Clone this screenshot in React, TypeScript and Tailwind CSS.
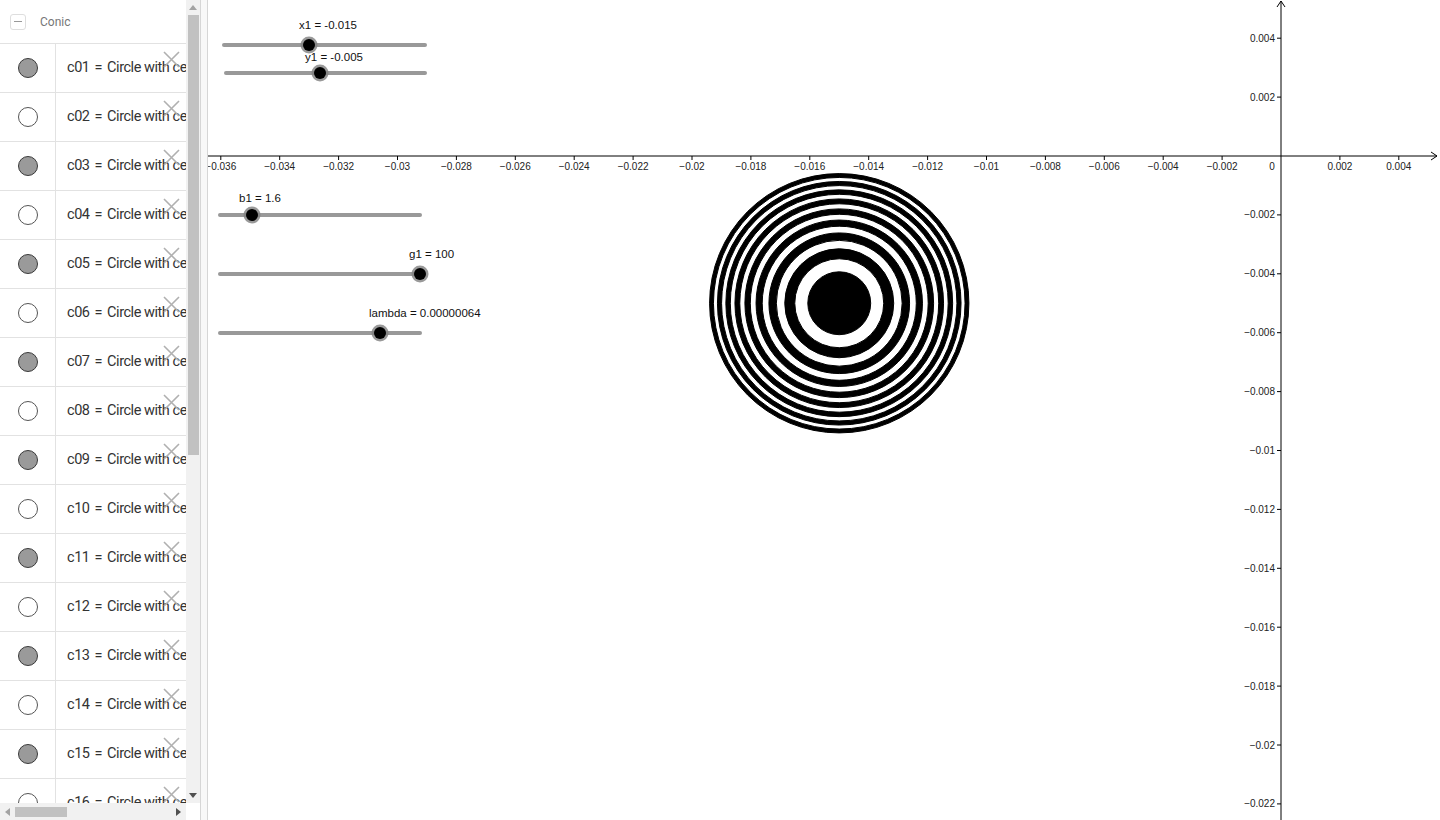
import React from 'react';

// Origin of the graphics view in page coordinates and pixels per 0.002
const OX = 1281;
const OY = 156;
const STEP = 58.9;

const fmt = (v: number) => {
  const s = Number(v.toFixed(3)).toString();
  return s.startsWith('-') ? '\u2212' + s.slice(1) : s;
};

const xTicks = Array.from({ length: 21 }, (_, i) => -0.036 + i * 0.002);
const yTicks = Array.from({ length: 14 }, (_, i) => 0.004 - i * 0.002).filter((v) => Math.abs(v) > 1e-9);

interface SliderProps {
  x1: number;
  x2: number;
  y: number;
  knob: number;
  label: string;
  lx: number;
  ly: number;
  anchor?: 'start' | 'middle';
}

const Slider: React.FC<SliderProps> = ({ x1, x2, y, knob, label, lx, ly, anchor = 'start' }) => (
  <g>
    <line x1={x1} y1={y} x2={x2} y2={y} stroke="#999" strokeWidth={4} strokeLinecap="round" />
    <circle cx={knob} cy={y} r={8.5} fill="#7f7f7f" fillOpacity={0.8} />
    <circle cx={knob} cy={y} r={6} fill="#000" />
    <text x={lx} y={ly} fontSize={11.5} textAnchor={anchor} fill="#111">
      {label}
    </text>
  </g>
);

const RINGS = Array.from({ length: 17 }, (_, i) => 17 - i);

const Graphics: React.FC = () => {
  const cx = OX - 7.5 * STEP;
  const cy = OY + 2.5 * STEP;
  return (
    <svg
      className="block"
      width={1232}
      height={820}
      viewBox="208 0 1232 820"
      style={{ fontFamily: '"Liberation Sans", Arial, sans-serif' }}
    >
      {/* zone plate */}
      {RINGS.map((n) => (
        <circle
          key={n}
          cx={cx}
          cy={cy}
          r={31.45 * Math.sqrt(n)}
          fill={n % 2 === 1 ? '#000' : '#fff'}
          stroke="#000"
          strokeWidth={1}
        />
      ))}

      {/* axes */}
      <line x1={208} y1={OY} x2={1437} y2={OY} stroke="#000" strokeWidth={1} />
      <polyline points={`1431,152 1437,${OY} 1431,160`} fill="none" stroke="#000" strokeWidth={1} />
      <line x1={OX} y1={1} x2={OX} y2={820} stroke="#000" strokeWidth={1} />
      <polyline points={`1277,7 ${OX},1 1285,7`} fill="none" stroke="#000" strokeWidth={1} />

      {xTicks.map((v) => {
        const x = OX + (v / 0.002) * STEP;
        const zero = Math.abs(v) < 1e-9;
        return (
          <g key={'x' + v}>
            {!zero && <line x1={x} y1={OY} x2={x} y2={OY + 4} stroke="#000" />}
            <text x={zero ? 1272 : x} y={170} fontSize={10} textAnchor="middle" fill="#222">
              {zero ? '0' : fmt(v)}
            </text>
          </g>
        );
      })}
      {yTicks.map((v) => {
        const y = OY - (v / 0.002) * STEP;
        return (
          <g key={'y' + v}>
            <line x1={OX - 4} y1={y} x2={OX} y2={y} stroke="#000" />
            <text x={1275} y={y + 3.5} fontSize={10} textAnchor="end" fill="#222">
              {fmt(v)}
            </text>
          </g>
        );
      })}

      <Slider x1={224} x2={425} y={45} knob={309} label="x1 = -0.015" lx={328} ly={29} anchor="middle" />
      <Slider x1={226} x2={425} y={73} knob={320} label="y1 = -0.005" lx={334} ly={61} anchor="middle" />
      <Slider x1={220} x2={420} y={215} knob={252} label="b1 = 1.6" lx={239} ly={202} />
      <Slider x1={220} x2={420} y={274} knob={420} label="g1 = 100" lx={409} ly={258} />
      <Slider x1={220} x2={420} y={333} knob={380} label="lambda = 0.00000064" lx={369} ly={317} />
    </svg>
  );
};

const Row: React.FC<{ n: number }> = ({ n }) => {
  const name = 'c' + String(n).padStart(2, '0');
  const filled = n % 2 === 1;
  return (
    <div className="relative flex h-[49px] shrink-0 border-b border-[#e2e2e2]">
      <div className="flex w-[56px] shrink-0 items-center justify-center border-r border-[#e2e2e2]">
        <span
          className={
            filled
              ? 'h-[20px] w-[20px] rounded-full border border-[#3a3a3a] bg-[#9a9a9a]'
              : 'h-[20px] w-[20px] rounded-full border border-[#555] bg-white'
          }
        />
      </div>
      <div className="flex items-center whitespace-nowrap pl-[11px] text-[14.5px] tracking-[-0.45px] text-[#333]">
        {name}
        <span className="px-[5px]">=</span>
        Circle with center
      </div>
      <svg className="absolute left-[163px] top-[7px]" width={17} height={17} viewBox="0 0 17 17">
        <path d="M1 1 L16 16 M16 1 L1 16" stroke="#b0b0b0" strokeWidth={1.6} />
      </svg>
    </div>
  );
};

export default function App() {
  return (
    <div
      className="flex h-[820px] w-[1440px] overflow-hidden bg-white"
      style={{ fontFamily: 'Roboto, "Liberation Sans", sans-serif' }}
    >
      {/* algebra panel */}
      <div className="relative flex h-full w-[200px] shrink-0">
        <div className="flex h-full w-[186px] flex-col overflow-hidden">
          <div className="flex h-[44px] shrink-0 items-center border-b border-[#e2e2e2]">
            <span className="ml-[10px] flex h-[16px] w-[16px] items-center justify-center rounded-[3px] border border-[#dedede]">
              <span className="h-px w-[8px] bg-[#999]" />
            </span>
            <span className="ml-[14px] text-[12px] text-[#777]">Conic</span>
          </div>
          {Array.from({ length: 17 }, (_, i) => (
            <Row key={i} n={i + 1} />
          ))}
        </div>

        {/* vertical scrollbar */}
        <div className="flex h-[803px] w-[14px] flex-col items-center bg-[#f1f1f1]">
          <div className="flex h-[15px] items-center">
            <span className="h-0 w-0 border-x-[4px] border-b-[5px] border-x-transparent border-b-[#a3a3a3]" />
          </div>
          <div className="h-[440px] w-[11px] bg-[#c1c1c1]" />
          <div className="flex-1" />
          <div className="flex h-[15px] items-center">
            <span className="h-0 w-0 border-x-[4px] border-t-[5px] border-x-transparent border-t-[#505050]" />
          </div>
        </div>

        {/* horizontal scrollbar */}
        <div className="absolute bottom-0 left-0 flex h-[17px] w-[186px] items-center bg-[#f1f1f1]">
          <span className="ml-[5px] h-0 w-0 border-y-[4px] border-r-[5px] border-y-transparent border-r-[#a3a3a3]" />
          <span className="ml-[5px] h-[10px] w-[52px] bg-[#c1c1c1]" />
          <span className="flex-1" />
          <span className="mr-[5px] h-0 w-0 border-y-[4px] border-l-[5px] border-y-transparent border-l-[#505050]" />
        </div>
      </div>

      {/* splitter */}
      <div className="h-full w-[8px] shrink-0 border-x border-[#d6d6d6] bg-[#f8f8f8]" />

      <div className="relative h-full flex-1">
        <Graphics />
      </div>
    </div>
  );
}
